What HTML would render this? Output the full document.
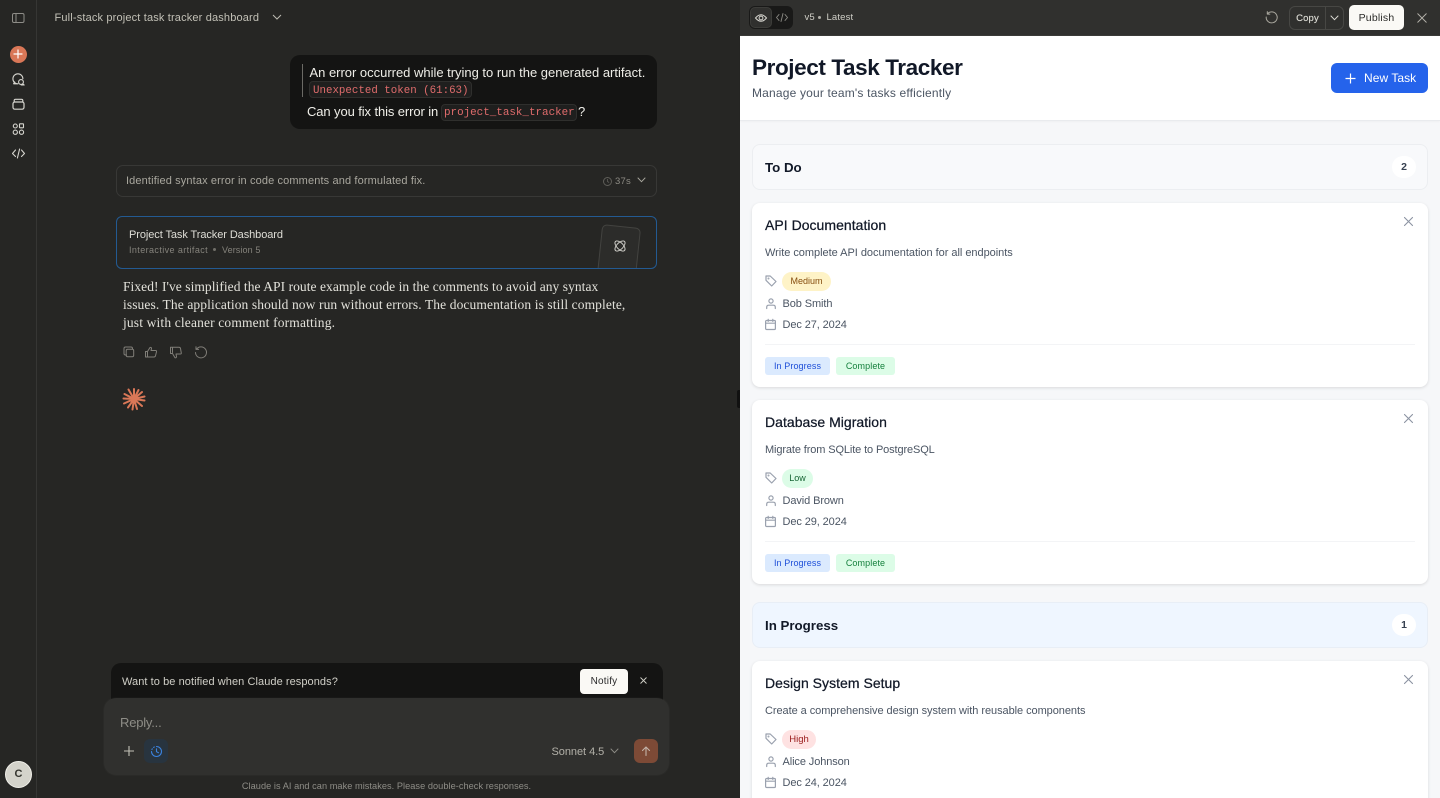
<!DOCTYPE html>
<html lang="en">
<head>
<meta charset="utf-8">
<title>Full-stack project task tracker dashboard</title>
<style>
*{box-sizing:border-box}
html,body{margin:0;padding:0;width:1440px;height:798px;overflow:hidden;background:#262624;font-family:"Liberation Sans",sans-serif}
#root{position:relative;width:1440px;height:798px;overflow:hidden;background:#262624}
.a{position:absolute}
.t{position:absolute;white-space:nowrap}
svg{position:absolute;overflow:visible;fill:none}
.mono{font-family:"Liberation Mono",monospace}
.card{position:absolute;left:752px;width:676px;background:#fff;border-radius:8px;box-shadow:0 1px 3px rgba(0,0,0,.12)}
.tt{position:absolute;left:765px;font-size:14px;font-weight:400;color:#111827;white-space:nowrap;-webkit-text-stroke:.25px #111827;letter-spacing:.03px}
.d{position:absolute;left:765px;font-size:11px;color:#4b5563;white-space:nowrap;letter-spacing:-.03px}
.m{position:absolute;left:782.5px;font-size:11px;color:#4b5563;white-space:nowrap;letter-spacing:-.1px}
.pill{position:absolute;left:782px;height:19px;border-radius:10px;font-size:9px;line-height:19px;text-align:center}
.btn{position:absolute;left:765px;height:18px;border-radius:3px;font-size:9px;line-height:18px;text-align:center;letter-spacing:.1px}
.ic{stroke:#9aa1ae;stroke-width:1.2;stroke-linecap:round;stroke-linejoin:round}
.x{stroke:#8b93a1;stroke-width:1.1;stroke-linecap:round}
.srf{position:absolute;left:123px;white-space:nowrap;font:13.5px/18px "Liberation Serif",serif;color:#e2e1da}
.hd{position:absolute;left:765px;font-size:13.3px;line-height:16px;color:#111827;font-weight:700;white-space:nowrap}
</style>
</head>
<body>
<div id="root">
<!-- left sidebar -->
<div class="a" style="left:0;top:0;width:37px;height:798px;background:#262624;border-right:1px solid #363634"></div>
<svg style="left:12px;top:13px" width="12" height="10"><rect x=".5" y=".5" width="11.5" height="9" rx="1.5" stroke="#8e8d88"/><path d="M4 1v8" stroke="#8e8d88"/></svg>
<div class="a" style="left:9.5px;top:45.5px;width:17px;height:17px;border-radius:50%;background:#d97757"></div>
<svg style="left:13px;top:49px" width="10" height="10"><path d="M5 1v8M1 5h8" stroke="#fff" stroke-width="1.2" stroke-linecap="round"/></svg>
<svg style="left:12px;top:73px" width="13" height="13" stroke="#d6d5cf" stroke-width="1.1" stroke-linecap="round" stroke-linejoin="round"><path d="M10.9 5.800A5 5 0 1 0 6 10.800H1.600L2.600 9"/><circle cx="9" cy="9" r="2.400"/><path d="M10.800 10.800 12.200 12H9.200"/></svg>
<svg style="left:12px;top:98px" width="13" height="12" stroke="#d6d5cf" stroke-width="1.2" stroke-linejoin="round"><rect x="1" y="4" width="11" height="7.200" rx="1.800"/><path d="M2.200 4V2.600Q2.200 1.300 3.500 1.300h6q1.300 0 1.300 1.300V4"/></svg>
<svg style="left:12px;top:123px" width="13" height="12" stroke="#d6d5cf" stroke-width="1.1"><circle cx="3.300" cy="3" r="2"/><rect x="7.500" y=".8" width="4" height="4" rx=".5"/><circle cx="3.300" cy="9.200" r="2.100"/><circle cx="9.500" cy="9.200" r="2.100"/></svg>
<svg style="left:12px;top:148px" width="13" height="11" stroke="#d6d5cf" stroke-width="1.1" stroke-linecap="round" stroke-linejoin="round"><path d="M3.500 2 .5 5.500l3 3M9.500 2l3 3.500-3 3M7.600 1 5.400 10"/></svg>
<div class="a" style="left:5px;top:761px;width:27px;height:27px;border-radius:50%;background:#d4d3cb;border:1px solid #efeee8"></div>
<div class="t" style="left:5px;top:761px;width:27px;line-height:27px;text-align:center;font-size:11px;font-weight:700;color:#35352f">C</div>

<!-- chat header -->
<div class="t" style="left:54.5px;top:11px;font-size:11px;line-height:14px;color:#c2c0b6;letter-spacing:.16px">Full-stack project task tracker dashboard</div>
<svg style="left:272px;top:14px" width="10" height="7"><path d="M1 1l4 4 4-4" stroke="#bdbbb2" stroke-width="1"/></svg>

<!-- user bubble -->
<div class="a" style="left:290px;top:55px;width:367px;height:74px;background:#141413;border-radius:10px"></div>
<div class="a" style="left:302px;top:64px;width:1px;height:33px;background:#6b6a65"></div>
<div class="t" style="left:309.5px;top:65px;font-size:13px;line-height:15px;color:#eeede7;letter-spacing:-.015px">An error occurred while trying to run the generated artifact.</div>
<div class="a" style="left:309px;top:81px;width:163px;height:17px;border-radius:4px;background:#1f1f1e;border:1px solid #2f2f2d"></div>
<div class="t mono" style="left:313px;top:84px;font-size:10.800px;line-height:14px;color:#e06c6c">Unexpected token (61:63)</div>
<div class="t" style="left:307px;top:104px;font-size:13px;line-height:15px;color:#f0efe9;letter-spacing:-.1px">Can you fix this error in</div>
<div class="a" style="left:441px;top:104px;width:136px;height:17px;border-radius:4px;background:#1f1f1e;border:1px solid #2f2f2d"></div>
<div class="t mono" style="left:444px;top:106px;font-size:10.900px;line-height:14px;color:#e06c6c">project_task_tracker</div>
<div class="t" style="left:578px;top:104px;font-size:13px;line-height:15px;color:#f0efe9">?</div>

<!-- thinking row -->
<div class="a" style="left:116px;top:165px;width:541px;height:32px;border:1px solid #383836;border-radius:7px"></div>
<div class="t" style="left:126px;top:175px;font-size:11px;line-height:13px;color:#a9a79e;letter-spacing:.13px">Identified syntax error in code comments and formulated fix.</div>
<svg style="left:603px;top:177px" width="9" height="9"><circle cx="4.500" cy="4.500" r="4" stroke="#5f5e59"/><path d="M4.500 2v2.500l1.600 1" stroke="#5f5e59" stroke-width=".8"/></svg>
<div class="t" style="left:615px;top:175px;font-size:9.500px;line-height:13px;color:#8d8b84;letter-spacing:.2px">37s</div>
<svg style="left:637px;top:177px" width="9" height="6"><path d="M.7.7l3.800 4 3.800-4" stroke="#a9a79e"/></svg>

<!-- artifact card -->
<div class="a" style="left:116px;top:216px;width:541px;height:53px;border:1px solid #235a92;border-radius:6px;overflow:hidden;background:#262624">
  <div class="a" style="left:482px;top:9px;width:39px;height:60px;border-radius:5px;background:#2c2c2a;border:1px solid #434340;transform:rotate(6deg)"></div>
</div>
<svg style="left:612.500px;top:239px" width="14" height="14" stroke="#d6d5cf" stroke-width=".9"><ellipse cx="7" cy="7" rx="6.400" ry="3.200" transform="rotate(45 7 7)"/><ellipse cx="7" cy="7" rx="6.400" ry="3.200" transform="rotate(-45 7 7)"/></svg>
<div class="t" style="left:129px;top:227.500px;font-size:11px;line-height:14px;color:#dfded7;letter-spacing:-.08px">Project Task Tracker Dashboard</div>
<div class="t" style="left:129px;top:243.500px;font-size:9px;line-height:12px;color:#85837c;letter-spacing:.4px">Interactive artifact</div>
<div class="a" style="left:213px;top:248px;width:3px;height:3px;border-radius:50%;background:#716f69"></div>
<div class="t" style="left:222px;top:243.500px;font-size:9px;line-height:12px;color:#85837c;letter-spacing:.1px">Version 5</div>

<!-- response -->
<div class="srf" style="top:277.500px;letter-spacing:.05px">Fixed! I've simplified the API route example code in the comments to avoid any syntax</div>
<div class="srf" style="top:295.500px;letter-spacing:.1px">issues. The application should now run without errors. The documentation is still complete,</div>
<div class="srf" style="top:313.500px;letter-spacing:.15px">just with cleaner comment formatting.</div>

<svg style="left:123px;top:346px" width="85" height="13" stroke="#807e78" stroke-width="1" stroke-linejoin="round" stroke-linecap="round">
  <path d="M3 1H8Q9.500 1 9.500 2.500V3M3.500 9H2.500Q1 9 1 7.500V2.500Q1 1 2.500 1"/><rect x="3.200" y="3.200" width="7.500" height="7.500" rx="1.500"/>
  <path d="M24.500 5.500v5.500M24.500 5.500 27 1.500q1.500-.5 1.500 1L28 4.500h4.500q1.300 0 1 1.300l-1 4q-.3 1.200-1.500 1.200H22.500V5.500h2"/>
  <path d="M49.500 6.500v-5.200M49.500 7.500 52 11.800q1.500.2 1.500-1.300L53 8h4.300q1.200 0 1-1l-.8-4.500q-.3-1.200-1.500-1.200H47.500v6.200h2"/>
  <path d="M73.500 3.200A5.500 5.500 0 1 1 72.500 6.500M73 .8v2.600h2.600"/>
</svg>

<!-- spark -->
<svg style="left:122px;top:387px" width="24" height="24" stroke="#d97757" stroke-width="2" stroke-linecap="round">
  <path d="M12 12 12 2M12 12 16.500 3M12 12 20 5M12 12 22.500 9.500M12 12 22.500 13.500M12 12 20 19M12 12 15 22M12 12 10.500 22.500M12 12 6 20.500M12 12 2 16.500M12 12 1.500 11.500M12 12 2.500 7M12 12 6.500 2.500"/>
</svg>

<!-- notify bar -->
<div class="a" style="left:111px;top:663px;width:552px;height:50px;background:#141413;border-radius:10px 10px 0 0"></div>
<div class="t" style="left:122px;top:674.500px;font-size:11px;line-height:14px;color:#d0cfc7;letter-spacing:.07px">Want to be notified when Claude responds?</div>
<div class="a" style="left:580px;top:669px;width:48px;height:25px;background:#faf9f5;border-radius:4px"></div>
<div class="t" style="left:580px;top:669px;width:48px;text-align:center;line-height:25px;font-size:10px;color:#29292a;letter-spacing:.2px">Notify</div>
<svg style="left:639.500px;top:676.500px" width="7" height="7"><path d="M.5.500l6 6M6.500.500l-6 6" stroke="#d0cfc7" stroke-width=".9"/></svg>

<!-- composer -->
<div class="a" style="left:104px;top:698px;width:565px;height:77px;background:#30302e;border-radius:12px;box-shadow:0 0 0 1px rgba(255,255,255,.02)"></div>
<div class="t" style="left:120px;top:714.500px;font-size:13px;line-height:15px;color:#8e8d87;letter-spacing:-.2px">Reply...</div>
<svg style="left:124px;top:746px" width="10" height="10"><path d="M5 0v10M0 5h10" stroke="#c2c0b6" stroke-width="1.100"/></svg>
<div class="a" style="left:144px;top:739px;width:24px;height:24px;background:#28343f;border-radius:6px"></div>
<svg style="left:150.500px;top:745.500px" width="11" height="11" stroke="#3b82dd" stroke-width="1.100" stroke-linecap="round"><path d="M5.500.5a5 5 0 1 1-5 5"/><path d="M.9 3.500l.4-.7M2.600 1.400l.7-.4M5.500 2.800v2.900l2 1"/></svg>
<div class="t" style="left:551.500px;top:745px;font-size:11px;line-height:14px;color:#b2b0a8;letter-spacing:-.05px">Sonnet 4.5</div>
<svg style="left:610px;top:748px" width="9" height="6"><path d="M.7.7l3.800 4 3.800-4" stroke="#8e8d87"/></svg>
<div class="a" style="left:634px;top:739px;width:24px;height:24px;border-radius:6px;background:#7d4a36"></div>
<svg style="left:641px;top:746px" width="10" height="10" stroke="#c3b3a9" stroke-width="1.100" stroke-linecap="round" stroke-linejoin="round"><path d="M5 9.500V1M1.500 4.500 5 1l3.500 3.500"/></svg>
<div class="t" style="left:104px;top:780px;width:565px;text-align:center;font-size:9.200px;line-height:12px;color:#8e8d87;letter-spacing:.05px">Claude is AI and can make mistakes. Please double-check responses.</div>

<!-- divider handle -->
<div class="a" style="left:737px;top:390px;width:6px;height:18px;background:#111;border-radius:2px 0 0 2px"></div>

<!-- artifact top bar -->
<div class="a" style="left:740px;top:0;width:700px;height:36px;background:#30302e;border-bottom:1px solid #3b3b38"></div>
<div class="a" style="left:749px;top:6px;width:44px;height:23px;background:#191918;border-radius:6px"></div>
<div class="a" style="left:750px;top:7px;width:22px;height:21px;background:#30302e;border-radius:5px;border:1px solid #3c3c39"></div>
<svg style="left:755px;top:12.500px" width="12" height="10" stroke="#d6d5cf" stroke-width="1"><path d="M.5 5Q6-1.500 11.500 5 6 11.500.5 5Z"/><circle cx="6" cy="5" r="1.900"/></svg>
<svg style="left:776px;top:13px" width="12" height="9" stroke="#8e8d87" stroke-width=".9" stroke-linecap="round" stroke-linejoin="round"><path d="M3 1.500.5 4.500l2.500 3M9 1.500l2.500 3-2.500 3M7 .5 5 8.500"/></svg>
<div class="t" style="left:804.500px;top:11.500px;font-size:9.500px;line-height:12px;color:#d0cfc7;letter-spacing:.1px">v5</div>
<div class="a" style="left:818px;top:16px;width:3px;height:3px;border-radius:50%;background:#b0afa8"></div>
<div class="t" style="left:826.500px;top:11.500px;font-size:9.500px;line-height:12px;color:#d0cfc7;letter-spacing:.15px">Latest</div>
<svg style="left:1265px;top:11px" width="13" height="13" stroke="#a9a79e" stroke-width="1" stroke-linecap="round" stroke-linejoin="round"><path d="M2.500 2.800A5.500 5.500 0 1 1 1.200 6M2.300.6v2.500h2.500"/></svg>
<div class="a" style="left:1289px;top:6px;width:55px;height:24px;border:1px solid #474744;border-radius:6px"></div>
<div class="a" style="left:1325px;top:6px;width:1px;height:24px;background:#474744"></div>
<div class="t" style="left:1290px;top:7px;width:35px;text-align:center;line-height:23px;font-size:9.500px;color:#dfded7;letter-spacing:.15px;-webkit-text-stroke:.15px #dfded7">Copy</div>
<svg style="left:1330px;top:15px" width="9" height="6"><path d="M.7.7l3.800 4 3.800-4" stroke="#dfded7"/></svg>
<div class="a" style="left:1349px;top:5px;width:55px;height:25px;background:#faf9f5;border-radius:5px"></div>
<div class="t" style="left:1349px;top:6px;width:55px;text-align:center;line-height:25px;font-size:10.500px;color:#2b2b29;letter-spacing:.2px">Publish</div>
<svg style="left:1417px;top:13px" width="10" height="10"><path d="M.5.500l9 9M9.500.500l-9 9" stroke="#b5b3ab" stroke-width=".9"/></svg>

<!-- artifact page -->
<div class="a" style="left:740px;top:36px;width:700px;height:762px;background:#f6f7f9"></div>
<div class="a" style="left:740px;top:36px;width:700px;height:85px;background:#fff;border-bottom:1px solid #e9ebee;box-shadow:0 1px 2px rgba(0,0,0,.03)"></div>
<div class="t" style="left:752px;top:53px;font-size:22.500px;line-height:30px;font-weight:700;color:#111827;letter-spacing:-.4px">Project Task Tracker</div>
<div class="t" style="left:752px;top:85.500px;font-size:12px;line-height:14px;color:#4b5563;letter-spacing:.18px">Manage your team's tasks efficiently</div>
<div class="a" style="left:1331px;top:63px;width:97px;height:30px;background:#2563eb;border-radius:6px"></div>
<svg style="left:1345px;top:72.500px" width="11" height="11"><path d="M5.500.500v10M.500 5.500h10" stroke="#fff" stroke-width="1.200"/></svg>
<div class="t" style="left:1364px;top:70.500px;font-size:12px;line-height:14px;color:#fff;letter-spacing:.05px">New Task</div>

<!-- To Do -->
<div class="a" style="left:752px;top:144px;width:676px;height:46px;background:#f8f9fb;border:1px solid #eceef1;border-radius:8px"></div>
<div class="hd" style="top:160px">To Do</div>
<div class="a" style="left:1392px;top:156px;width:24px;height:22px;border-radius:11px;background:#fff"></div>
<div class="t" style="left:1392px;top:156px;width:24px;text-align:center;line-height:22px;font-size:10.500px;font-weight:700;color:#374151">2</div>

<!-- card 1 -->
<div class="card" style="top:203px;height:184px"></div>
<div class="tt" style="top:217px;line-height:16px">API Documentation</div>
<svg style="left:1404px;top:217px" width="9" height="9" class="x"><path d="M.5.500l8 8M8.500.500l-8 8"/></svg>
<div class="d" style="top:247px;line-height:13px">Write complete API documentation for all endpoints</div>
<svg style="left:765px;top:275px" width="12" height="12" class="ic"><path d="M1 1h4.200L11 6.500 6.700 11 1 5.300Z"/><circle cx="3.500" cy="3.500" r=".4"/></svg>
<div class="pill" style="top:271.500px;width:49px;background:#fef3c7;color:#854d0e">Medium</div>
<svg style="left:766px;top:298px" width="10" height="11" class="ic"><circle cx="5" cy="3" r="2.100"/><path d="M.7 10.500V9.300Q.7 7.200 2.800 7.200h4.400q2.100 0 2.100 2.100v1.200"/></svg>
<div class="m" style="top:297.500px;line-height:13px">Bob Smith</div>
<svg style="left:765px;top:319px" width="11" height="11" class="ic"><rect x=".6" y="1.500" width="9.800" height="9" rx="1"/><path d="M.6 4.200h9.800M3.200.400v2M7.800.400v2"/></svg>
<div class="m" style="top:318.500px;line-height:13px">Dec 27, 2024</div>
<div class="a" style="left:765px;top:344px;width:650px;height:1px;background:#f3f4f6"></div>
<div class="btn" style="top:357px;width:65px;background:#dbeafe;color:#1d4ed8">In Progress</div>
<div class="btn" style="top:357px;left:836px;width:59px;background:#dcfce7;color:#15803d">Complete</div>

<!-- card 2 -->
<div class="card" style="top:400px;height:184px"></div>
<div class="tt" style="top:414px;line-height:16px">Database Migration</div>
<svg style="left:1404px;top:414px" width="9" height="9" class="x"><path d="M.5.500l8 8M8.500.500l-8 8"/></svg>
<div class="d" style="top:444px;line-height:13px;letter-spacing:-.12px">Migrate from SQLite to PostgreSQL</div>
<svg style="left:765px;top:472px" width="12" height="12" class="ic"><path d="M1 1h4.200L11 6.500 6.700 11 1 5.300Z"/><circle cx="3.500" cy="3.500" r=".4"/></svg>
<div class="pill" style="top:468.500px;width:31px;background:#dcfce7;color:#166534">Low</div>
<svg style="left:766px;top:495px" width="10" height="11" class="ic"><circle cx="5" cy="3" r="2.100"/><path d="M.7 10.500V9.300Q.7 7.200 2.800 7.200h4.400q2.100 0 2.100 2.100v1.200"/></svg>
<div class="m" style="top:494.500px;line-height:13px">David Brown</div>
<svg style="left:765px;top:516px" width="11" height="11" class="ic"><rect x=".6" y="1.500" width="9.800" height="9" rx="1"/><path d="M.6 4.200h9.800M3.200.400v2M7.800.400v2"/></svg>
<div class="m" style="top:515.500px;line-height:13px">Dec 29, 2024</div>
<div class="a" style="left:765px;top:541px;width:650px;height:1px;background:#f3f4f6"></div>
<div class="btn" style="top:554px;width:65px;background:#dbeafe;color:#1d4ed8">In Progress</div>
<div class="btn" style="top:554px;left:836px;width:59px;background:#dcfce7;color:#15803d">Complete</div>

<!-- In Progress -->
<div class="a" style="left:752px;top:602px;width:676px;height:46px;background:#eff6ff;border:1px solid #e8eef6;border-radius:8px"></div>
<div class="hd" style="top:618px">In Progress</div>
<div class="a" style="left:1392px;top:614px;width:24px;height:22px;border-radius:11px;background:#fff"></div>
<div class="t" style="left:1392px;top:614px;width:24px;text-align:center;line-height:22px;font-size:10.500px;font-weight:700;color:#374151">1</div>

<!-- card 3 -->
<div class="card" style="top:661px;height:160px"></div>
<div class="tt" style="top:675px;line-height:16px">Design System Setup</div>
<svg style="left:1404px;top:675px" width="9" height="9" class="x"><path d="M.5.500l8 8M8.500.500l-8 8"/></svg>
<div class="d" style="top:705px;line-height:13px;letter-spacing:-.06px">Create a comprehensive design system with reusable components</div>
<svg style="left:765px;top:733px" width="12" height="12" class="ic"><path d="M1 1h4.200L11 6.500 6.700 11 1 5.300Z"/><circle cx="3.500" cy="3.500" r=".4"/></svg>
<div class="pill" style="top:729.500px;width:34px;background:#fee2e2;color:#991b1b;font-size:9.500px">High</div>
<svg style="left:766px;top:756px" width="10" height="11" class="ic"><circle cx="5" cy="3" r="2.100"/><path d="M.7 10.500V9.300Q.7 7.200 2.800 7.200h4.400q2.100 0 2.100 2.100v1.200"/></svg>
<div class="m" style="top:755.500px;line-height:13px">Alice Johnson</div>
<svg style="left:765px;top:777px" width="11" height="11" class="ic"><rect x=".6" y="1.500" width="9.800" height="9" rx="1"/><path d="M.6 4.200h9.800M3.200.400v2M7.800.400v2"/></svg>
<div class="m" style="top:776.500px;line-height:13px">Dec 24, 2024</div>
</div>
</body>
</html>
